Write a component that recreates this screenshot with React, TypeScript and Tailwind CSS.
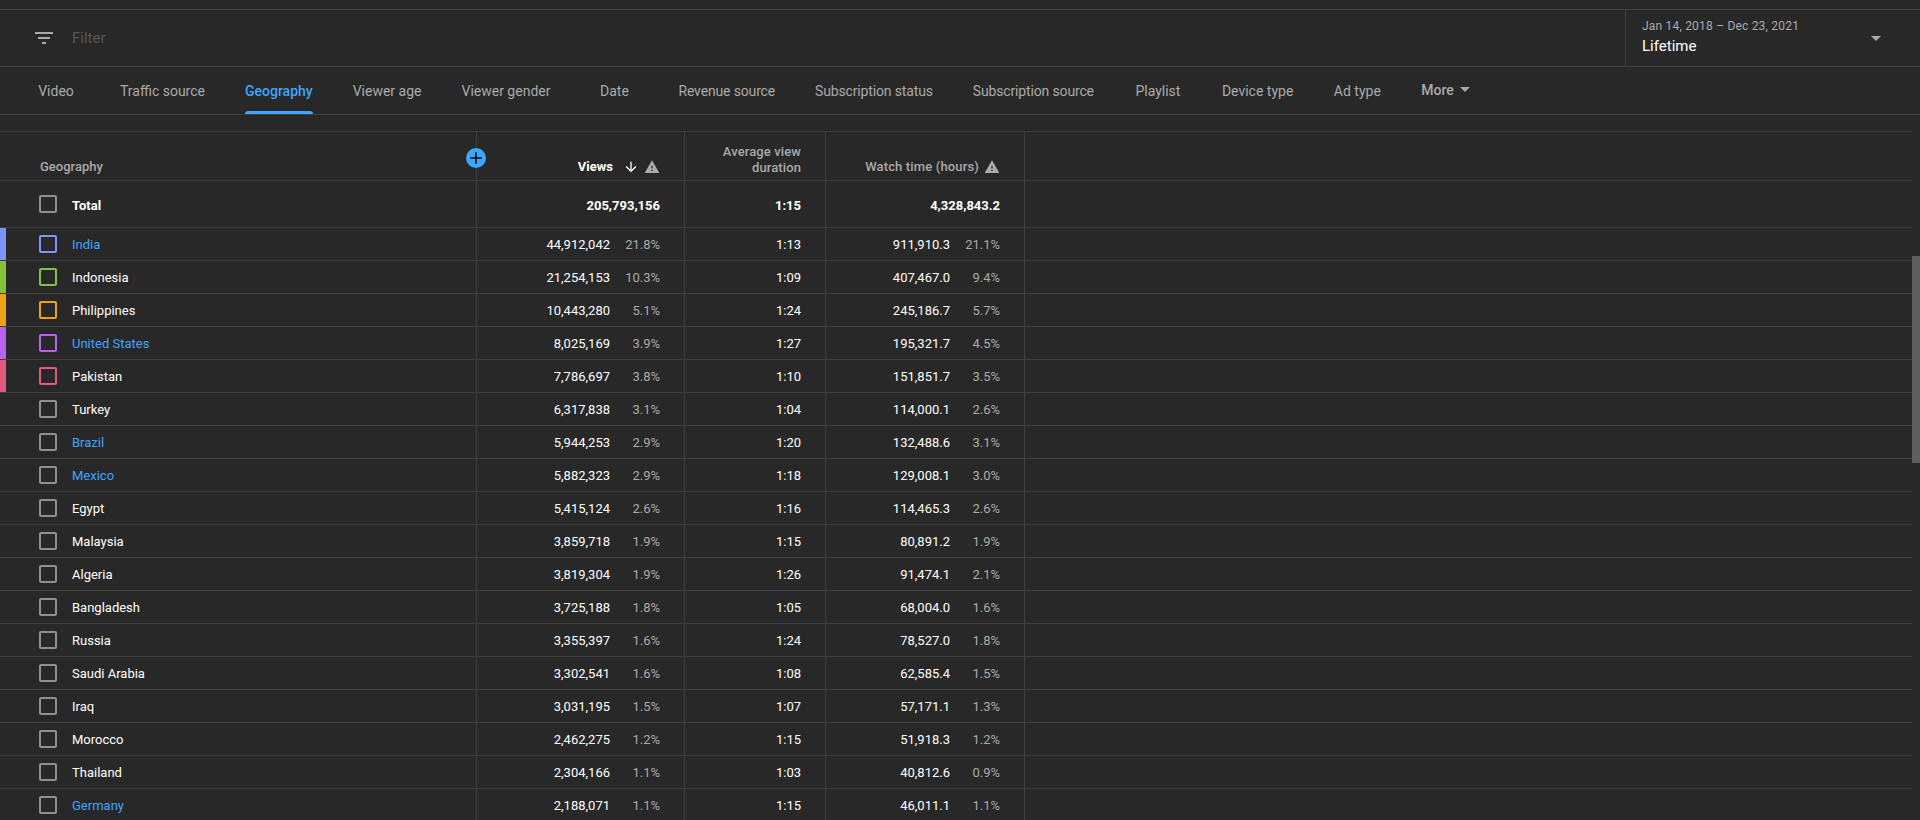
const tabs = [
  "Video",
  "Traffic source",
  "Geography",
  "Viewer age",
  "Viewer gender",
  "Date",
  "Revenue source",
  "Subscription status",
  "Subscription source",
  "Playlist",
  "Device type",
  "Ad type",
];

const narrowTabs = ["Revenue source", "Subscription status", "Subscription source"];

const rows = [
  { name: "India", link: true, color: "bg-[#8094ff]", box: "border-[#8094ff]", views: "44,912,042", viewsPct: "21.8%", avg: "1:13", watch: "911,910.3", watchPct: "21.1%" },
  { name: "Indonesia", color: "bg-[#84c13c]", box: "border-[#84c13c]", views: "21,254,153", viewsPct: "10.3%", avg: "1:09", watch: "407,467.0", watchPct: "9.4%" },
  { name: "Philippines", color: "bg-[#eda315]", box: "border-[#eda315]", views: "10,443,280", viewsPct: "5.1%", avg: "1:24", watch: "245,186.7", watchPct: "5.7%" },
  { name: "United States", link: true, color: "bg-[#b964ee]", box: "border-[#b964ee]", views: "8,025,169", viewsPct: "3.9%", avg: "1:27", watch: "195,321.7", watchPct: "4.5%" },
  { name: "Pakistan", color: "bg-[#e25a7c]", box: "border-[#e25a7c]", views: "7,786,697", viewsPct: "3.8%", avg: "1:10", watch: "151,851.7", watchPct: "3.5%" },
  { name: "Turkey", views: "6,317,838", viewsPct: "3.1%", avg: "1:04", watch: "114,000.1", watchPct: "2.6%" },
  { name: "Brazil", link: true, views: "5,944,253", viewsPct: "2.9%", avg: "1:20", watch: "132,488.6", watchPct: "3.1%" },
  { name: "Mexico", link: true, views: "5,882,323", viewsPct: "2.9%", avg: "1:18", watch: "129,008.1", watchPct: "3.0%" },
  { name: "Egypt", views: "5,415,124", viewsPct: "2.6%", avg: "1:16", watch: "114,465.3", watchPct: "2.6%" },
  { name: "Malaysia", views: "3,859,718", viewsPct: "1.9%", avg: "1:15", watch: "80,891.2", watchPct: "1.9%" },
  { name: "Algeria", views: "3,819,304", viewsPct: "1.9%", avg: "1:26", watch: "91,474.1", watchPct: "2.1%" },
  { name: "Bangladesh", views: "3,725,188", viewsPct: "1.8%", avg: "1:05", watch: "68,004.0", watchPct: "1.6%" },
  { name: "Russia", views: "3,355,397", viewsPct: "1.6%", avg: "1:24", watch: "78,527.0", watchPct: "1.8%" },
  { name: "Saudi Arabia", views: "3,302,541", viewsPct: "1.6%", avg: "1:08", watch: "62,585.4", watchPct: "1.5%" },
  { name: "Iraq", views: "3,031,195", viewsPct: "1.5%", avg: "1:07", watch: "57,171.1", watchPct: "1.3%" },
  { name: "Morocco", views: "2,462,275", viewsPct: "1.2%", avg: "1:15", watch: "51,918.3", watchPct: "1.2%" },
  { name: "Thailand", views: "2,304,166", viewsPct: "1.1%", avg: "1:03", watch: "40,812.6", watchPct: "0.9%" },
  { name: "Germany", link: true, views: "2,188,071", viewsPct: "1.1%", avg: "1:15", watch: "46,011.1", watchPct: "1.1%" },
];

const gridCols = "grid grid-cols-[477px_208px_141px_199px_1fr]";

function WarningIcon() {
  return (
    <svg viewBox="0 0 24 24" className="w-4 h-4 fill-[#aaaaaa] ml-[5px] shrink-0">
      <path d="M1 21h22L12 2 1 21zm12-3h-2v-2h2v2zm0-4h-2v-4h2v4z" />
    </svg>
  );
}

function Caret({ className }: { className: string }) {
  return (
    <svg viewBox="0 0 10 5" className={className}>
      <path d="M0 0l5 5 5-5z" />
    </svg>
  );
}

function Checkbox({ box }: { box?: string }) {
  return (
    <span className={`w-[18px] h-[18px] border-2 rounded-[2px] shrink-0 ${box || "border-[#909090]"}`} />
  );
}

export default function App() {
  return (
    <div className="relative h-[820px] w-full overflow-hidden bg-[#282828] [font-family:Roboto,sans-serif] text-[13px] text-white">
      <div className="h-[9px]" />

      {/* filter bar */}
      <div className="flex h-[58px] border-y border-[#3f3f3f]">
        <div className="flex flex-1 items-center pl-8">
          <svg viewBox="0 0 24 24" className="w-6 h-6 fill-[#aaaaaa]">
            <path d="M10 18h4v-2h-4v2zM3 6v2h18V6H3zm3 7h12v-2H6v2z" />
          </svg>
          <span className="ml-4 text-[15px] text-[#555555]">Filter</span>
        </div>
        <div className="relative w-[295px] border-l border-[#3f3f3f] pl-4 pt-2">
          <div className="text-xs leading-4 tracking-[0.2px] text-[#aaaaaa]">Jan 14, 2018 – Dec 23, 2021</div>
          <div className="mt-[2px] text-[15px] leading-5 text-white">Lifetime</div>
          <Caret className="absolute right-[39px] top-[26px] w-[10px] h-[5px] fill-[#aaaaaa]" />
        </div>
      </div>

      {/* tabs */}
      <div className="flex h-[48px] items-center gap-10 border-b border-[#3f3f3f] pl-8 text-sm text-[#aaaaaa]">
        {tabs.map((t) => (
          <div
            key={t}
            className={`relative flex h-full min-w-12 items-center justify-center ${t === "Geography" ? "font-medium text-[#3ea6ff]" : ""} ${narrowTabs.includes(t) ? "tracking-[-0.15px]" : ""}`}
          >
            {t}
            {t === "Geography" && (
              <span className="absolute bottom-0 left-0 right-0 h-[3px] rounded-t-[3px] bg-[#3ea6ff]" />
            )}
          </div>
        ))}
        <div className="flex items-center gap-[6px] pb-[2px] text-sm font-medium">
          More
          <Caret className="w-[10px] h-[5px] fill-[#aaaaaa]" />
        </div>
      </div>

      <div className="h-4" />

      {/* table */}
      <div className="mr-2 border-t border-[#3f3f3f]">
        <div className={`${gridCols} relative h-[49px] border-b border-[#3f3f3f] text-[#aaaaaa] font-medium`}>
          <div className="flex items-end border-r border-[#3f3f3f] pb-[5px] pl-10 leading-4">Geography</div>
          <div className="flex items-end justify-end border-r border-[#3f3f3f] pb-[5px] pr-6 leading-4">
            <span className="font-bold text-white">Views</span>
            <svg viewBox="0 0 24 24" className="ml-[10px] w-4 h-4 fill-white">
              <path d="M20 12l-1.41-1.41L13 16.17V4h-2v12.17l-5.58-5.6L4 12l8 8 8-8z" />
            </svg>
            <WarningIcon />
          </div>
          <div className="flex items-end justify-end border-r border-[#3f3f3f] pb-[4px] pr-6 text-right leading-4 tracking-[0.1px]">
            Average view
            <br />
            duration
          </div>
          <div className="flex items-end justify-end border-r border-[#3f3f3f] pb-[5px] pr-6 leading-4 tracking-[0.15px]">
            Watch time (hours)
            <WarningIcon />
          </div>
          <div />
          <span className="absolute left-[466px] top-[16px] flex h-5 w-5 items-center justify-center rounded-full bg-[#3ea6ff]">
            <svg viewBox="0 0 24 24" className="w-5 h-5 fill-[#0f0f0f]">
              <path d="M19 13h-6v6h-2v-6H5v-2h6V5h2v6h6v2z" />
            </svg>
          </span>
        </div>

        <div className={`${gridCols} h-[47px] border-b border-[#3f3f3f] font-bold`}>
          <div className="flex items-center border-r border-[#3f3f3f] pl-[39px]">
            <Checkbox />
            <span className="ml-[15px] pt-[3px]">Total</span>
          </div>
          <div className="flex items-center justify-end border-r border-[#3f3f3f] pt-[3px] pr-6">205,793,156</div>
          <div className="flex items-center justify-end border-r border-[#3f3f3f] pt-[3px] pr-6">1:15</div>
          <div className="flex items-center justify-end border-r border-[#3f3f3f] pt-[3px] pr-6">4,328,843.2</div>
          <div />
        </div>

        {rows.map((r) => (
          <div key={r.name} className={`${gridCols} relative h-[33px] border-b border-[#3f3f3f]`}>
            {r.color && <span className={`absolute left-0 top-0 bottom-0 w-[6px] ${r.color}`} />}
            <div className={`flex items-center border-r border-[#3f3f3f] pl-[39px] ${r.link ? "text-[#3ea6ff]" : ""}`}>
              <Checkbox box={r.box} />
              <span className="ml-[15px] pt-[2px]">{r.name}</span>
            </div>
            <div className="flex items-center justify-end border-r border-[#3f3f3f] pt-[2px] pr-6">
              {r.views}
              <span className="w-[50px] text-right text-[#aaaaaa]">{r.viewsPct}</span>
            </div>
            <div className="flex items-center justify-end border-r border-[#3f3f3f] pt-[2px] pr-6">{r.avg}</div>
            <div className="flex items-center justify-end border-r border-[#3f3f3f] pt-[2px] pr-6">
              {r.watch}
              <span className="w-[50px] text-right text-[#aaaaaa]">{r.watchPct}</span>
            </div>
            <div />
          </div>
        ))}
      </div>

      {/* page scrollbar */}
      <div className="absolute right-0 top-[256px] h-[207px] w-2 bg-[#5f5f5f]" />
    </div>
  );
}
